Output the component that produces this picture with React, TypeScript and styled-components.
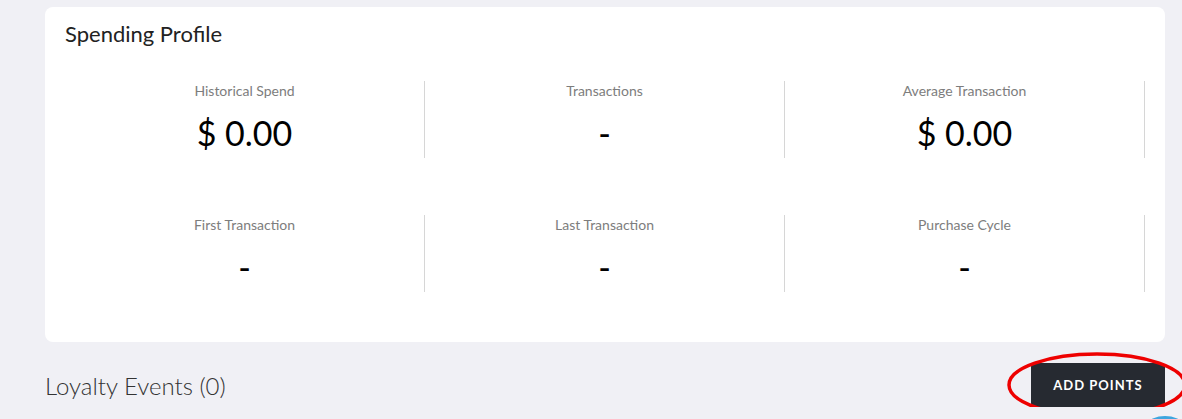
import styled, { createGlobalStyle } from "styled-components";
import { FC } from "react";

const GlobalStyle = createGlobalStyle`
  html, body {
    margin: 0;
    padding: 0;
    background: #f0f0f5;
    font-family: Lato, "Open Sans", "Liberation Sans", sans-serif;
    overflow: hidden;
  }
`;

interface Stat {
  label: string;
  value: string;
}

const stats: Stat[] = [
  { label: "Historical Spend", value: "$ 0.00" },
  { label: "Transactions", value: "-" },
  { label: "Average Transaction", value: "$ 0.00" },
  { label: "First Transaction", value: "-" },
  { label: "Last Transaction", value: "-" },
  { label: "Purchase Cycle", value: "-" },
];

const StatCell: FC<Stat> = ({ label, value }) => (
  <Cell>
    <Label>{label}</Label>
    <Value>{value}</Value>
  </Cell>
);

export default function App() {
  return (
    <>
      <GlobalStyle />
      <Page>
        <Card>
          <Title>Spending Profile</Title>
          <Grid>
            {stats.map((s) => (
              <StatCell key={s.label} {...s} />
            ))}
          </Grid>
        </Card>
        <EventsBar>
          <EventsTitle>Loyalty Events (0)</EventsTitle>
          <ButtonWrap>
            <AddButton>ADD POINTS</AddButton>
            <Highlight viewBox="0 0 190 70">
              <ellipse
                cx="90"
                cy="33"
                rx="88"
                ry="31"
                fill="none"
                stroke="#ee0000"
                strokeWidth="3.5"
              />
            </Highlight>
          </ButtonWrap>
        </EventsBar>
      </Page>
      <ChatBubble />
    </>
  );
}

const Page = styled.div`
  padding: 7px 17px 0 45px;
  width: 1120px;
`;

const Card = styled.div`
  background: #ffffff;
  border-radius: 8px;
  padding: 14px 20px 50px 20px;
`;

const Title = styled.h2`
  margin: 0;
  font-size: 22px;
  line-height: 26px;
  font-weight: 400;
  color: #222;
`;

const Grid = styled.div`
  margin-top: 34px;
  display: grid;
  grid-template-columns: repeat(3, 360px);
  row-gap: 57px;
`;

const Cell = styled.div`
  height: 77px;
  border-right: 1px solid #d6d6d6;
  display: flex;
  flex-direction: column;
  align-items: center;
`;

const Label = styled.div`
  font-size: 14px;
  line-height: 20px;
  color: #7d7d7d;
`;

const Value = styled.div`
  margin-top: 12px;
  font-size: 34px;
  line-height: 40px;
  color: #000;
`;

const EventsBar = styled.div`
  margin-top: 21px;
  display: flex;
  align-items: center;
  justify-content: space-between;
`;

const EventsTitle = styled.div`
  font-size: 24px;
  font-weight: 300;
  color: #333;
`;

const ButtonWrap = styled.div`
  position: relative;
`;

const AddButton = styled.button`
  width: 134px;
  height: 44px;
  border: none;
  border-radius: 4px;
  background: #262a31;
  color: #fff;
  font-family: Lato, "Liberation Sans", sans-serif;
  font-weight: 700;
  font-size: 13px;
  letter-spacing: 1px;
  cursor: pointer;
`;

const Highlight = styled.svg`
  position: absolute;
  left: -24px;
  top: -11px;
  width: 190px;
  height: 70px;
  overflow: visible;
  pointer-events: none;
`;

const ChatBubble = styled.div`
  position: fixed;
  left: 1133px;
  top: 416px;
  width: 64px;
  height: 64px;
  border-radius: 50%;
  background: #3ea6df;
`;
